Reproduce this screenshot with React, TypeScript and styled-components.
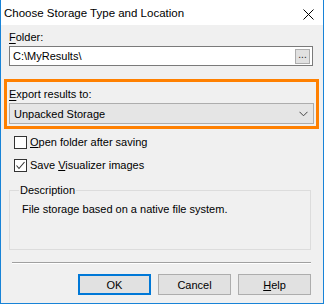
import React from "react";
import styled, { createGlobalStyle } from "styled-components";

const GlobalStyle = createGlobalStyle`
  html, body {
    margin: 0;
    padding: 0;
    background: #ffffff;
  }
  body {
    font-family: "Liberation Sans", Arial, sans-serif;
    font-size: 11px;
    color: #000;
  }
`;

const App = () => {
  return (
    <>
      <GlobalStyle />
      <S.Window>
        <S.TitleBar>
          <S.Title>Choose Storage Type and Location</S.Title>
          <S.Close>
            <svg width="11" height="11" viewBox="0 0 11 11">
              <path d="M0.5 0.5 L10.5 10.5 M10.5 0.5 L0.5 10.5" stroke="#000" strokeWidth="1" />
            </svg>
          </S.Close>
        </S.TitleBar>
        <S.Body>
          <S.Label>
            <u>F</u>older:
          </S.Label>
          <S.TextBox>
            <S.TextValue>C:\MyResults\</S.TextValue>
            <S.BrowseButton>...</S.BrowseButton>
          </S.TextBox>

          <S.Highlight>
            <S.Label>
              <u>E</u>xport results to:
            </S.Label>
            <S.Combo>
              <span>Unpacked Storage</span>
              <svg width="9" height="6" viewBox="0 0 9 6">
                <polyline points="0.5,0.8 4.5,4.8 8.5,0.8" fill="none" stroke="#444" strokeWidth="1" />
              </svg>
            </S.Combo>
          </S.Highlight>

          <S.CheckRow>
            <S.CheckBox />
            <span>
              <u>O</u>pen folder after saving
            </span>
          </S.CheckRow>
          <S.CheckRow $gap={10}>
            <S.CheckBox>
              <svg width="11" height="11" viewBox="0 0 11 11">
                <polyline points="1.5,5.5 4,8.5 9.5,2" fill="none" stroke="#333" strokeWidth="1.1" />
              </svg>
            </S.CheckBox>
            <span>
              Save <u>V</u>isualizer images
            </span>
          </S.CheckRow>

          <S.Group>
            <S.Legend>Description</S.Legend>
            <S.GroupText>File storage based on a native file system.</S.GroupText>
          </S.Group>

          <S.Separator />

          <S.ButtonRow>
            <S.Button $primary>OK</S.Button>
            <S.Button>Cancel</S.Button>
            <S.Button>
              <u>H</u>elp
            </S.Button>
          </S.ButtonRow>
        </S.Body>
      </S.Window>
    </>
  );
};

export default App;

const S = {
  Window: styled.div`
    width: 324px;
    height: 304px;
    box-sizing: border-box;
    border: 1px solid #1883d7;
    border-top: none;
    background: #f0f0f0;
    display: flex;
    flex-direction: column;
  `,

  TitleBar: styled.div`
    height: 25px;
    background: #ffffff;
    display: flex;
    align-items: center;
    justify-content: space-between;
    padding: 0 9px 0 3px;
  `,

  Title: styled.div`
    font-size: 11.5px;
    color: #000;
    margin-top: 1px;
  `,

  Close: styled.div`
    width: 11px;
    height: 11px;
    display: flex;
    margin-top: 3px;
  `,

  Body: styled.div`
    flex: 1;
    padding: 5px 10px 0 8px;
    display: flex;
    flex-direction: column;
  `,

  Label: styled.div`
    height: 15px;
    line-height: 15px;
    margin-bottom: 1px;
    u {
      text-decoration-thickness: 1px;
      text-underline-offset: 2px;
    }
  `,

  TextBox: styled.div`
    height: 20px;
    box-sizing: border-box;
    border: 1px solid #7a7a7a;
    background: #ffffff;
    display: flex;
    align-items: center;
    justify-content: space-between;
    padding: 0 2px 0 3px;
  `,

  TextValue: styled.span`
    line-height: 16px;
  `,

  BrowseButton: styled.div`
    width: 15px;
    height: 15px;
    box-sizing: border-box;
    border: 1px solid #adadad;
    background: #e1e1e1;
    font-size: 10px;
    line-height: 9px;
    text-align: center;
    color: #222;
  `,

  Highlight: styled.div`
    margin: 13px -6px 0 -5px;
    border: 3px solid #ff8000;
    padding: 5px 2px 2px 2px;
    display: flex;
    flex-direction: column;
  `,

  Combo: styled.div`
    height: 21px;
    box-sizing: border-box;
    border: 1px solid #adadad;
    background: #e5e5e5;
    display: flex;
    align-items: center;
    justify-content: space-between;
    padding: 0 5px 0 4px;
  `,

  CheckRow: styled.label<{ $gap?: number }>`
    display: flex;
    align-items: center;
    gap: 3px;
    margin: ${(p) => p.$gap ?? 7}px 0 0 5px;
    height: 13px;
    line-height: 13px;
  `,

  CheckBox: styled.span`
    width: 13px;
    height: 13px;
    box-sizing: border-box;
    border: 1px solid #333;
    background: #ffffff;
    display: flex;
    align-items: center;
    justify-content: center;
  `,

  Group: styled.fieldset`
    margin: 11px 2px 0 0;
    padding: 4px 12px 0;
    height: 67px;
    box-sizing: border-box;
    border: 1px solid #dcdcdc;
    min-width: 0;
  `,

  Legend: styled.legend`
    padding: 0 1px;
    margin-left: -3px;
    line-height: 14px;
  `,

  GroupText: styled.div`
    line-height: 16px;
  `,

  Separator: styled.div`
    height: 1px;
    margin: 12px 2px 0 3px;
    background: #a0a0a0;
    border-bottom: 1px solid #ffffff;
  `,

  ButtonRow: styled.div`
    display: flex;
    justify-content: flex-end;
    gap: 7px;
    margin: 10px 2px 0 0;
  `,

  Button: styled.button<{ $primary?: boolean }>`
    width: 73px;
    height: 21px;
    box-sizing: border-box;
    border: ${(p) => (p.$primary ? "2px solid #0078d7" : "1px solid #adadad")};
    background: #e1e1e1;
    font-family: inherit;
    font-size: 11px;
    color: #000;
    padding: 0;
  `,
};
